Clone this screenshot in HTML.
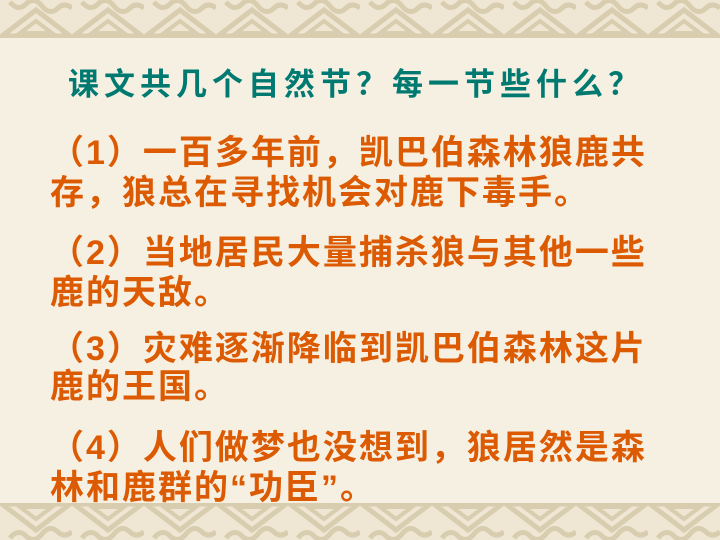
<!DOCTYPE html>
<html><head><meta charset="utf-8"><style>
body{margin:0;width:720px;height:540px;overflow:hidden;background:#f6f0e3;position:relative;font-family:"Liberation Sans","Noto Sans CJK SC",sans-serif}
.band{position:absolute;left:0;width:720px;height:38px;background:#efe6d3}
.t{position:absolute;white-space:nowrap;font-weight:bold}
.o{color:#dc5a02;font-size:34px;letter-spacing:2px;left:50px}
</style></head><body>
<svg class="band" style="top:0" width="720" height="38">
<defs><pattern id="p" width="72" height="38" patternUnits="userSpaceOnUse">
<rect width="72" height="38" fill="#efe6d3"/>
<path d="M2 36 L36 10 L70 36 Z" fill="none" stroke="#d9cdb0" stroke-width="5"/>
<path d="M20 33 L36 21 L52 33 Z" fill="none" stroke="#d9cdb0" stroke-width="4"/>
<path d="M10 2 q8 10 16 2 q8 -8 16 2 q8 10 16 2 q6 -6 14 0" fill="none" stroke="#d9cdb0" stroke-width="5"/>
</pattern></defs>
<rect width="720" height="38" fill="url(#p)"/></svg>
<svg class="band" style="top:503px;height:37px" width="720" height="37">
<rect width="720" height="37" fill="url(#p)" transform="scale(1,-1) translate(0,-37)"/></svg>
<div class="t" style="left:68px;top:59px;color:#007a70;font-size:31px;letter-spacing:5px">课文共几个自然节？每一节些什么？</div>
<div class="t o" style="top:125px">（1）一百多年前，凯巴伯森林狼鹿共</div>
<div class="t o" style="top:165px">存，狼总在寻找机会对鹿下毒手。</div>
<div class="t o" style="top:225px">（2）当地居民大量捕杀狼与其他一些</div>
<div class="t o" style="top:265px">鹿的天敌。</div>
<div class="t o" style="top:321px">（3）灾难逐渐降临到凯巴伯森林这片</div>
<div class="t o" style="top:359px">鹿的王国。</div>
<div class="t o" style="top:420px">（4）人们做梦也没想到，狼居然是森</div>
<div class="t o" style="top:460px">林和鹿群的“功臣”。</div>
</body></html>
